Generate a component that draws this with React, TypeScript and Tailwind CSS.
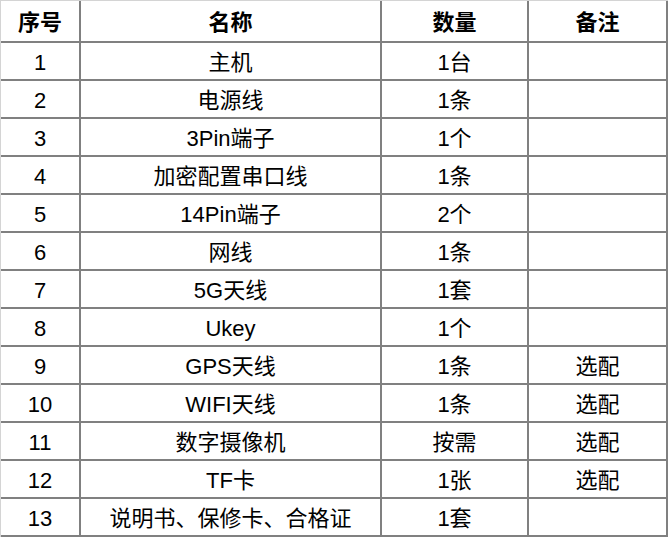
import React from "react";

const rows: [string, string, string, string][] = [
  ["1", "主机", "1台", ""],
  ["2", "电源线", "1条", ""],
  ["3", "3Pin端子", "1个", ""],
  ["4", "加密配置串口线", "1条", ""],
  ["5", "14Pin端子", "2个", ""],
  ["6", "网线", "1条", ""],
  ["7", "5G天线", "1套", ""],
  ["8", "Ukey", "1个", ""],
  ["9", "GPS天线", "1条", "选配"],
  ["10", "WIFI天线", "1条", "选配"],
  ["11", "数字摄像机", "按需", "选配"],
  ["12", "TF卡", "1张", "选配"],
  ["13", "说明书、保修卡、合格证", "1套", ""],
];

const headers = ["序号", "名称", "数量", "备注"];

const App = () => {
  return (
    <div className="w-[669px] h-[537px] bg-white">
      <div className="w-[668px] h-[537px] border-t border-l border-[#d4d4d4]">
        <div
          className="grid grid-cols-[78px_299px_145px_137px] grid-rows-[40px] auto-rows-[36px] gap-[2px] pr-[2px] pb-[2px] bg-[#808080] w-[667px] text-[22px] text-black leading-none"
          style={{ fontFamily: '"Liberation Sans", "Noto Sans CJK SC", sans-serif' }}
        >
          {headers.map((h) => (
            <div key={h} className="bg-white flex items-center justify-center pt-[3px] font-bold">
              {h}
            </div>
          ))}
          {rows.map((row) =>
            row.map((cell, i) => (
              <div key={row[0] + "-" + i} className="bg-white flex items-center justify-center pt-[4px]">
                {cell}
              </div>
            ))
          )}
        </div>
      </div>
    </div>
  );
};

export default App;
